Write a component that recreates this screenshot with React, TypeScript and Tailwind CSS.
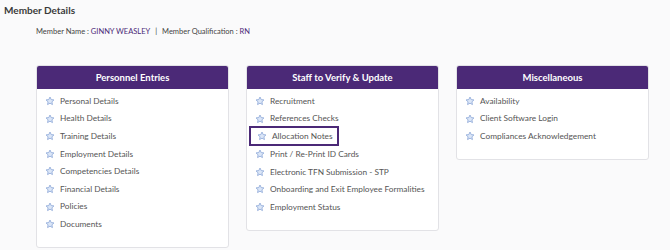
import React from "react";

const sections = [
  {
    title: "Personnel Entries",
    items: [
      "Personal Details",
      "Health Details",
      "Training Details",
      "Employment Details",
      "Competencies Details",
      "Financial Details",
      "Policies",
      "Documents",
    ],
  },
  {
    title: "Staff to Verify & Update",
    items: [
      "Recruitment",
      "References Checks",
      "Allocation Notes",
      "Print / Re-Print ID Cards",
      "Electronic TFN Submission - STP",
      "Onboarding and Exit Employee Formalities",
      "Employment Status",
    ],
  },
  {
    title: "Miscellaneous",
    items: ["Availability", "Client Software Login", "Compliances Acknowledgement"],
  },
];

function Star() {
  return (
    <svg width="10" height="10" viewBox="0 0 24 24" className="shrink-0">
      <path
        d="M12 2.5l2.9 6.1 6.6.8-4.9 4.6 1.3 6.6L12 17.3l-5.9 3.3 1.3-6.6-4.9-4.6 6.6-.8z"
        fill="#dbe6f7"
        stroke="#8fa9d9"
        strokeWidth="2"
        strokeLinejoin="round"
      />
    </svg>
  );
}

function Panel({ title, items }: { title: string; items: string[] }) {
  return (
    <div className="w-[193px] rounded-[3px] border border-[#e2e2e6] bg-white overflow-hidden">
      <div className="h-[23px] bg-[#4b2977] flex items-center justify-center text-white font-bold text-[9.5px]">
        {title}
      </div>
      <ul className="pt-[3px] pb-[14px] px-[8px]">
        {items.map((item) => (
          <li
            key={item}
            className={
              item === "Allocation Notes"
                ? "h-[20px] my-[-1px] -mx-[6px] px-[6px] w-[90px] border-2 border-[#4b2977] flex items-center gap-[5px] text-[8.3px] text-[#555] whitespace-nowrap"
                : "h-[17.6px] flex items-center gap-[5px] text-[8.3px] text-[#555] whitespace-nowrap"
            }
          >
            <Star />
            <span>{item}</span>
          </li>
        ))}
      </ul>
    </div>
  );
}

export default function App() {
  return (
    <div
      className="w-[670px] h-[250px] bg-[#fafafb] text-[#333]"
      style={{ fontFamily: "Lato, 'Open Sans', sans-serif" }}
    >
      <div className="pl-[4px] pt-[3px] text-[10px] font-bold text-[#3a3a3a]">Member Details</div>
      <div className="pl-[36px] pt-[8px] text-[7.5px] text-[#444]">
        Member Name : <span className="text-[#4b2977]">GINNY WEASLEY</span>
        <span className="mx-[5px]">|</span>
        Member Qualification : <span className="text-[#4b2977]">RN</span>
      </div>
      <div className="flex items-start gap-[17px] pl-[36px] pt-[28px]">
        {sections.map((s) => (
          <Panel key={s.title} title={s.title} items={s.items} />
        ))}
      </div>
    </div>
  );
}
